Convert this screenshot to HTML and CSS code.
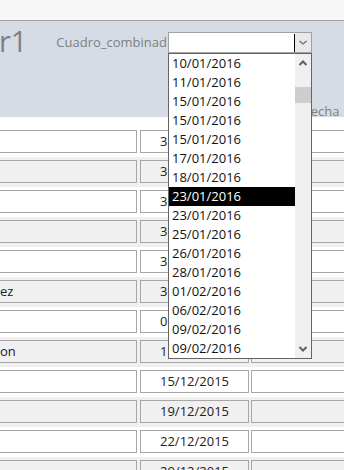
FILE: index.html
```html
<!DOCTYPE HTML>
<html>
<head>
  <meta charset="UTF-8">
  <title>Formulario1</title>
  <link rel="stylesheet" href="styles.css">
</head>
<body>
  <div class="titlebar"></div>
  <div class="header">
    <div class="header-top">
      <div class="form-title">r1</div>
      <label class="combo-label">Cuadro_combinad</label>
      <div class="combo">
        <div class="combo-input"></div>
        <div class="combo-btn">
          <svg width="16" height="19" viewBox="0 0 16 19"><polyline points="4.5,8 8,11 11.5,8" fill="none" stroke="#6d6d6d" stroke-width="1.3"/></svg>
        </div>
        <div class="dropdown">
          <ul class="dropdown-list">
            <li>10/01/2016</li>
            <li>11/01/2016</li>
            <li>15/01/2016</li>
            <li>15/01/2016</li>
            <li>15/01/2016</li>
            <li>17/01/2016</li>
            <li>18/01/2016</li>
            <li class="selected">23/01/2016</li>
            <li>23/01/2016</li>
            <li>25/01/2016</li>
            <li>26/01/2016</li>
            <li>28/01/2016</li>
            <li>01/02/2016</li>
            <li>06/02/2016</li>
            <li>09/02/2016</li>
            <li>09/02/2016</li>
          </ul>
          <div class="scrollbar">
            <div class="scroll-btn">
              <svg width="16" height="19" viewBox="0 0 16 19"><polyline points="4.5,11 8,7.5 11.5,11" fill="none" stroke="#606060" stroke-width="2"/></svg>
            </div>
            <div class="scroll-thumb"></div>
            <div class="scroll-track"></div>
            <div class="scroll-btn">
              <svg width="16" height="19" viewBox="0 0 16 19"><polyline points="4.5,8 8,11.5 11.5,8" fill="none" stroke="#606060" stroke-width="2"/></svg>
            </div>
          </div>
        </div>
      </div>
    </div>
    <div class="header-bottom">
      <span class="col-label">Fecha</span>
    </div>
  </div>

  <div class="detail">
    <div class="row"><div class="cell c1"></div><div class="cell c2">30/11/2015</div><div class="cell c3"></div></div>
    <div class="row alt"><div class="cell c1"></div><div class="cell c2">30/11/2015</div><div class="cell c3"></div></div>
    <div class="row"><div class="cell c1"></div><div class="cell c2">30/11/2015</div><div class="cell c3"></div></div>
    <div class="row alt"><div class="cell c1"></div><div class="cell c2">30/11/2015</div><div class="cell c3"></div></div>
    <div class="row"><div class="cell c1"></div><div class="cell c2">30/11/2015</div><div class="cell c3"></div></div>
    <div class="row alt"><div class="cell c1">ez</div><div class="cell c2">30/11/2015</div><div class="cell c3"></div></div>
    <div class="row"><div class="cell c1"></div><div class="cell c2">05/12/2015</div><div class="cell c3"></div></div>
    <div class="row alt"><div class="cell c1">on</div><div class="cell c2">12/12/2015</div><div class="cell c3"></div></div>
    <div class="row"><div class="cell c1"></div><div class="cell c2">15/12/2015</div><div class="cell c3"></div></div>
    <div class="row alt"><div class="cell c1"></div><div class="cell c2">19/12/2015</div><div class="cell c3"></div></div>
    <div class="row"><div class="cell c1"></div><div class="cell c2">22/12/2015</div><div class="cell c3"></div></div>
    <div class="row alt"><div class="cell c1"></div><div class="cell c2">29/12/2015</div><div class="cell c3"></div></div>
  </div>
</body>
</html>
```

FILE: styles.css
```css
body { margin: 0; overflow: hidden; background: #fff; font-family: "Open Sans", Arial, sans-serif; font-size: 13px; color: #222;}

.titlebar { height: 20px; background: #f7f7f7; border-bottom: 1px solid #a0a0a0;}

/* form header */
.header { height: 96px; background: #d6dce5; display: flex; flex-direction: column;}
.header-top { display: flex; align-items: flex-start; padding-top: 11px; padding-right: 32px;}
.form-title { font-size: 29px; line-height: 1; color: #7f7f7f; margin-left: -1px; margin-top: -6px;}
.combo-label { margin-left: auto; margin-right: 1px; color: #7f7f7f; line-height: 19px; margin-top: 1px;}

.combo { position: relative; width: 144px; height: 21px; box-sizing: border-box; border: 1px solid #a0a0a0; background: #fff; display: flex;}
.combo-input { flex: 1; border-right: 1px solid #000; margin: 1px 0 0;}
.combo-btn { width: 16px; background: #e9e9e9; display: flex; align-items: center;}
.combo-btn svg { display: block;}

/* open list of the combo */
.dropdown { position: absolute; top: 20px; left: -1px; width: 144px; height: 306px; box-sizing: border-box; border: 1px solid #646464; background: #fff; display: flex;}
.dropdown-list { list-style: none; margin: 0; padding: 0; flex: 1;}
.dropdown-list li { height: 19px; line-height: 19px; padding-left: 3px; color: #111;}
.dropdown-list li.selected { background: #000; color: #fff;}

.scrollbar { width: 16px; background: #f0f0f0; display: flex; flex-direction: column;}
.scroll-btn { height: 19px;}
.scroll-btn svg { display: block;}
.scroll-thumb { height: 16px; margin-top: 14px; background: #cdcdcd;}
.scroll-track { flex: 1;}

.header-bottom { margin-top: auto; padding-left: 304px;}
.col-label { display: block; color: #7f7f7f; line-height: 12px;}

/* detail rows */
.detail { padding-top: 10px;}
.row { display: flex; height: 30px; box-sizing: border-box; padding: 3px 0 4px; margin-left: -40px; background: #fff;}
.row.alt { background: #f0f0f0;}
.cell { height: 23px; box-sizing: border-box; border: 1px solid #a6a6a6; background: #fff; line-height: 21px; white-space: nowrap; overflow: hidden; flex: none;}
.row.alt .cell { background: #f0f0f0;}
.c1 { width: 177px; margin-right: 3px; padding-left: 39px;}
.c2 { width: 109px; margin-right: 2px; text-align: center;}
.c3 { width: 120px;}
```
